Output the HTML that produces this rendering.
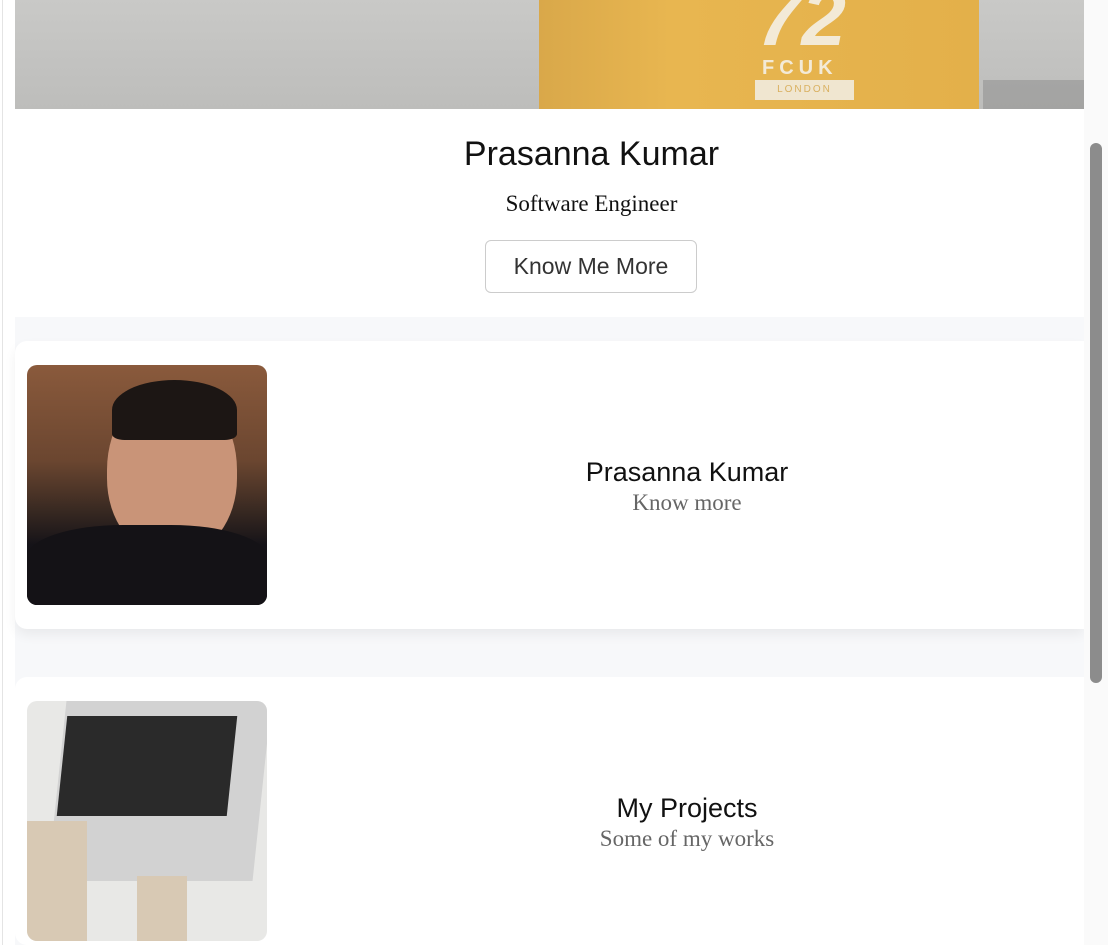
<!DOCTYPE html>
<html><head><style>
html,body{margin:0;width:1108px;height:945px;overflow:hidden}
body{background:#fff;position:relative;font-family:"Liberation Sans",sans-serif}
.lb{position:absolute;left:2px;top:0;width:1px;height:945px;background:#e4e4e4}
.hero{position:absolute;left:15px;top:0;width:1069px;height:109px;background:linear-gradient(180deg,#c9c9c7,#bdbdbb);overflow:hidden}
.shirt{position:absolute;left:524px;top:0;width:440px;height:109px;background:linear-gradient(90deg,#d9a84a,#e8b650 30%,#e3b04a)}
.shirt .t{position:absolute;left:223px;top:57px;color:#f3ead7;font-size:20px;letter-spacing:5px;font-weight:bold}
.shirt .n{position:absolute;left:218px;top:-28px;color:#f3ead7;font-size:80px;font-weight:bold;font-style:italic}
.shirt .l{position:absolute;left:216px;top:80px;width:99px;height:20px;background:#f0e6d0;color:#d9b060;font-size:10px;text-align:center;line-height:20px;letter-spacing:2px}
.ocean{position:absolute;left:968px;top:80px;width:101px;height:29px;background:#8a8a8a;opacity:.5}
h1{position:absolute;left:15px;width:1153px;top:135px;margin:0;text-align:center;font-weight:normal;font-size:34px;color:#111}
.sub{position:absolute;left:15px;width:1153px;top:191px;text-align:center;font-family:"Liberation Serif",serif;font-size:23px;color:#111}
.btn{position:absolute;left:485px;top:240px;width:210px;height:51px;border:1px solid #ccc;border-radius:6px;text-align:center;line-height:51px;font-size:23px;color:#333}
.gray{position:absolute;left:15px;top:317px;width:1069px;height:628px;background:#f7f8fa}
.card{position:absolute;left:15px;width:1069px;background:#fff;border-radius:12px 0 0 12px;box-shadow:0 6px 12px rgba(0,0,0,.06)}
.img{position:absolute;left:12px;top:24px;width:240px;height:240px;border-radius:10px;overflow:hidden}
.ct{position:absolute;left:275px;right:0;text-align:center}
.ct .a{font-size:27px;color:#111;line-height:32px}
.ct .b{font-family:"Liberation Serif",serif;font-size:23px;color:#666;line-height:30px}
.sb{position:absolute;left:1084px;top:0;width:24px;height:945px;background:#fafafa}
.th{position:absolute;left:1090px;top:143px;width:12px;height:540px;background:#8c8c8c;border-radius:6px}
</style></head><body>
<div class="lb"></div>
<div class="hero"><div class="shirt"><div class="n">72</div><div class="t">FCUK</div><div class="l">LONDON</div></div><div class="ocean"></div></div>
<h1>Prasanna Kumar</h1>
<div class="sub">Software Engineer</div>
<div class="btn">Know Me More</div>
<div class="gray"></div>
<div class="card" style="top:341px;height:288px">
<div class="img" style="background:linear-gradient(180deg,#8a5a3c 0%,#6b4630 40%,#3a2a22 60%,#151318 75%,#111 100%)">
<div style="position:absolute;left:80px;top:20px;width:130px;height:170px;border-radius:50% 50% 45% 45%;background:#c99478"></div>
<div style="position:absolute;left:85px;top:15px;width:125px;height:60px;border-radius:50% 50% 10% 10%;background:#1c1614"></div>
<div style="position:absolute;left:0;top:160px;width:240px;height:80px;background:#141216;border-radius:40% 40% 0 0"></div>
</div>
<div class="ct" style="top:115px"><div class="a">Prasanna Kumar</div><div class="b">Know more</div></div>
</div>
<div class="card" style="top:677px;height:268px;box-shadow:none">
<div class="img" style="background:#e8e8e6">
<div style="position:absolute;left:30px;top:0;width:205px;height:180px;background:#d2d2d2;transform:skewX(-6deg)"></div>
<div style="position:absolute;left:35px;top:15px;width:170px;height:100px;background:#2a2a2a;transform:skewX(-6deg)"></div>
<div style="position:absolute;left:0;top:120px;width:60px;height:120px;background:#d8c9b4"></div>
<div style="position:absolute;left:110px;top:175px;width:50px;height:65px;background:#d8c9b4"></div>
</div>
<div class="ct" style="top:115px"><div class="a">My Projects</div><div class="b">Some of my works</div></div>
</div>
<div class="sb"></div><div class="th"></div>
</body></html>
